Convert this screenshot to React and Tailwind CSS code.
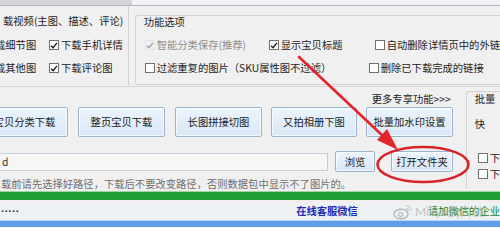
import React from "react";

function Box({ checked, disabled }) {
  return (
    <span
      className={
        disabled
          ? "w-[10px] h-[10px] flex items-center justify-center shrink-0 border border-[#e6e6e6] bg-[#f0f0f0]"
          : "w-[10px] h-[10px] flex items-center justify-center shrink-0 border border-[#707070] bg-white"
      }
    >
      {checked && (
        <svg viewBox="0 0 10 10" className="w-[9px] h-[9px]">
          <path
            d="M1.3 5.2 L3.9 7.8 L8.7 1.8"
            fill="none"
            stroke={disabled ? "#a0a0a0" : "#1c1c1c"}
            strokeWidth="1.7"
          />
        </svg>
      )}
    </span>
  );
}

function Check({ checked, disabled, children, className = "" }) {
  return (
    <div className={"flex items-center h-[12px] gap-[2px] " + className}>
      <Box checked={checked} disabled={disabled} />
      <span className={disabled ? "text-[#8e8e8e] whitespace-nowrap" : "text-[#1c1c1c] whitespace-nowrap"}>
        {children}
      </span>
    </div>
  );
}

function Btn({ children, className = "" }) {
  return (
    <div
      className={
        "shrink-0 flex items-center justify-center rounded-[2px] border border-[#9db3cc] bg-linear-to-b from-[#edf5fd] to-[#d8e7f6] text-[#1a1a1a] whitespace-nowrap shadow-[inset_0_0_0_1px_rgba(255,255,255,0.7)] " +
        className
      }
    >
      {children}
    </div>
  );
}

export default function App() {
  return (
    <div className="relative w-[500px] h-[228px] overflow-hidden bg-[#f0f0f0] font-['Noto_Sans_CJK_SC','Noto_Sans',sans-serif] text-[10.3px] leading-[12px] text-[#1c1c1c]">
      {/* top strip */}
      <div className="flex h-[5px]">
        <div className="w-[132px] bg-[#d4d4d4]" />
        <div className="flex-1 bg-[#f3f3f3]" />
      </div>
      <div className="h-px bg-[#aab6c6]" />

      {/* top section */}
      <div className="flex h-[81px] border-b border-[#d6d6d6]">
        <div className="w-[137px] h-full border-r border-[#d2d2d2] flex flex-col pt-[9px]">
          <div className="pl-[3px] whitespace-nowrap">载视频(主图、描述、评论)</div>
          <div className="flex items-center h-[12px] mt-[12px] ml-[-5px]">
            <span className="w-[54px] whitespace-nowrap overflow-hidden">载细节图</span>
            <Check checked>下载手机详情</Check>
          </div>
          <div className="flex items-center h-[12px] mt-[11px] ml-[-5px]">
            <span className="w-[54px] whitespace-nowrap overflow-hidden">载其他图</span>
            <Check checked>下载评论图</Check>
          </div>
        </div>

        <div className="ml-[6px] flex-1 mt-[9px] h-[70px] border-l border-t border-b border-[#d2d2d2] rounded-tl-[3px] rounded-bl-[3px] flex flex-col">
          <div className="pl-[8px] whitespace-nowrap">功能选项</div>
          <div className="flex items-center mt-[11px] pl-[9px]">
            <Check checked disabled className="w-[124px]">智能分类保存(推荐)</Check>
            <Check checked className="w-[106px]">显示宝贝标题</Check>
            <Check>自动删除详情页中的外链</Check>
          </div>
          <div className="flex items-center mt-[11px] pl-[9px]">
            <Check className="w-[224px]">过滤重复的图片（SKU属性图不过滤）</Check>
            <Check>删除已下载完成的链接</Check>
          </div>
        </div>
      </div>

      {/* middle section */}
      <div className="flex h-[104px]">
        <div className="w-[473px] flex flex-col">
          <div className="mt-[6px] h-[12px] text-right pr-[15px] whitespace-nowrap">更多专享功能&gt;&gt;&gt;</div>
          <div className="mt-[2px] h-[30px] flex">
            <Btn className="ml-[-19px] w-[87px] h-[30px]">宝贝分类下载</Btn>
            <Btn className="ml-[10px] w-[87px] h-[30px]">整页宝贝下载</Btn>
            <Btn className="ml-[10px] w-[87px] h-[30px]">长图拼接切图</Btn>
            <Btn className="ml-[9px] w-[86px] h-[30px]">又拍相册下图</Btn>
            <Btn className="ml-[9px] w-[87px] h-[30px]">批量加水印设置</Btn>
          </div>
          <div className="mt-[14px] h-[21px] flex items-center">
            <div className="ml-[-10px] w-[338px] h-[18px] border border-[#c3cfdc] bg-[#f6f6f6] flex items-center pl-[11px] text-[#333]">
              d
            </div>
            <Btn className="ml-[7px] w-[40px] h-[21px]">浏览</Btn>
            <Btn className="ml-[16px] w-[62px] h-[21px] border-[#7f9bbd]">打开文件夹</Btn>
          </div>
          <div className="mt-[6px] pl-[1px] whitespace-nowrap text-[#6e6e6e]">
            载前请先选择好路径，下载后不要改变路径，否则数据包中显示不了图片的。
          </div>
        </div>
        <div className="flex-1 mt-[4px] mb-[2px] border-l border-t border-[#d2d2d2] rounded-tl-[3px] flex flex-col">
          <div className="pl-[8px] mt-[1px] whitespace-nowrap">批量</div>
          <div className="pl-[8px] mt-[13px] whitespace-nowrap">快</div>
          <div className="pl-[11px] mt-[23px] flex items-center gap-[2px] h-[10px]">
            <Box />
            <span className="whitespace-nowrap">下</span>
          </div>
          <div className="pl-[11px] mt-[6px] flex items-center gap-[2px] h-[10px]">
            <Box />
            <span className="whitespace-nowrap">下</span>
          </div>
        </div>
      </div>

      {/* green bar */}
      <div className="h-px bg-[#9fd6a0]" />
      <div className="h-[8px] bg-[#1f9e35]" />
      <div className="h-[2px] bg-[#f4ecec]" />

      {/* status */}
      <div className="h-[18px] bg-[#edf1f4] flex items-center">
        <span className="pl-[1px] w-[314px] font-['Liberation_Sans',sans-serif] text-[11px] font-bold text-[#333]">·····</span>
        <span className="font-bold text-[#1d2db8] whitespace-nowrap">在线客服微信</span>
        <span className="ml-[70px] text-[#12861f] whitespace-nowrap">请加微信的企业</span>
      </div>
      <div className="h-px bg-[#bcd4ee]" />
      <div className="h-[6px] bg-[#5e9fe8]" />

      {/* watermark */}
      <div className="absolute left-[393px] top-[203px] h-[18px] flex items-center gap-[2px] pointer-events-none">
        <svg width="20" height="16" viewBox="0 0 20 16">
          <ellipse cx="8" cy="10" rx="7" ry="4.8" fill="none" stroke="#b8b8b8" strokeWidth="1.4" />
          <circle cx="7.5" cy="10.5" r="2" fill="none" stroke="#b8b8b8" strokeWidth="1.2" />
          <path d="M13 2 Q18 2 18 7" fill="none" stroke="#c4c4c4" strokeWidth="1.2" />
          <path d="M13 4.5 Q15.5 4.5 15.5 7" fill="none" stroke="#c4c4c4" strokeWidth="1.1" />
        </svg>
        <span className="text-[12px] text-[rgba(175,175,175,0.75)] whitespace-nowrap font-['Lato',sans-serif]">
          Mikyu的口袋
        </span>
      </div>

      {/* red annotations */}
      <svg className="absolute inset-0 pointer-events-none" width="500" height="228" viewBox="0 0 500 228">
        <line x1="299" y1="57" x2="384" y2="137" stroke="#e3262b" strokeWidth="2.6" strokeLinecap="round" />
        <polygon points="398,150 377,140 387,129" fill="#e3262b" />
        <ellipse cx="423" cy="164.5" rx="45.5" ry="17.5" fill="none" stroke="#d9232a" strokeWidth="2.6" />
      </svg>
    </div>
  );
}
